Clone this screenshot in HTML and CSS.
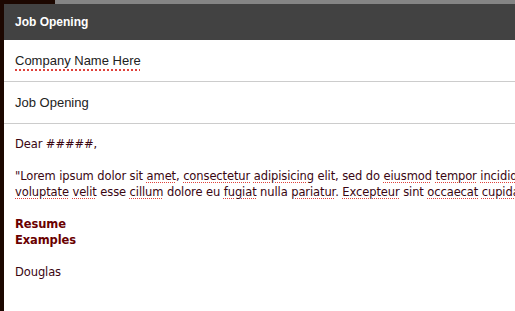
FILE: index.html
```html
<!DOCTYPE html>
<html lang="en">
<head>
  <meta charset="UTF-8" />
  <meta name="viewport" content="width=device-width, initial-scale=1.0"/>
  <title>Job Opening</title>
  <link rel="stylesheet" href="styles.css">
</head>
<body>
  <div class="backdrop"></div>

  <div class="panel">
    <div class="panel-header">Job Opening</div>

    <div class="field"><span class="sp sp-thick">Company Name Here</span></div>
    <div class="field">Job Opening</div>

    <div class="letter">
      <p>Dear #####,</p>
      <p class="lorem">
        <span class="line">"Lorem ipsum dolor sit <span class="sp">amet</span>, <span class="sp">consectetur</span> <span class="sp">adipisicing</span> elit, sed do <span class="sp">eiusmod</span> <span class="sp">tempor</span> <span class="sp">incididunt</span> ut labore et dolore magna aliqua.</span>
        <span class="line"><span class="sp">voluptate</span> <span class="sp">velit</span> esse <span class="sp">cillum</span> dolore eu <span class="sp">fugiat</span> nulla <span class="sp">pariatur</span>. <span class="sp">Excepteur</span> sint <span class="sp">occaecat</span> <span class="sp">cupidatat</span> non proident."</span>
      </p>
      <p class="sig">Resume<br>Examples</p>
      <p>Douglas</p>
    </div>
  </div>
</body>
</html>
```

FILE: styles.css
```css
body {
  margin: 0;
  background: #1c0700;
  overflow: hidden;
  height: 311px;
}

.backdrop {
  height: 4px;
  margin-left: 55px;
  background: #858585;
}

.panel {
  margin-left: 4px;
  background: #fff;
  height: 307px;
  overflow: hidden;
}

.panel-header {
  height: 36px;
  line-height: 36px;
  padding-left: 11px;
  background: #424242;
  color: #fff;
  font-family: "Liberation Sans", Arial, sans-serif;
  font-weight: bold;
  font-size: 12px;
}

.field {
  height: 41px;
  line-height: 41px;
  padding-left: 11px;
  border-bottom: 1px solid #cccccc;
  font-family: "Liberation Sans", Arial, sans-serif;
  font-size: 13px;
  color: #222;
}

.letter {
  padding: 12px 0 0 11px;
  font-family: "DejaVu Sans", Verdana, sans-serif;
  font-size: 11.5px;
  letter-spacing: -0.1px;
  line-height: 16px;
  color: #3a0612;
}

.letter p {
  margin: 0 0 16px;
}

.lorem .line {
  display: block;
  white-space: nowrap;
}

.sig {
  font-weight: bold;
  color: #6a0000;
}

.sp {
  text-decoration: underline dotted #e0413a;
  text-decoration-thickness: 1px;
  text-underline-offset: 2px;
}

.sp-thick {
  text-decoration-thickness: 2px;
  text-underline-offset: 4px;
}
```
